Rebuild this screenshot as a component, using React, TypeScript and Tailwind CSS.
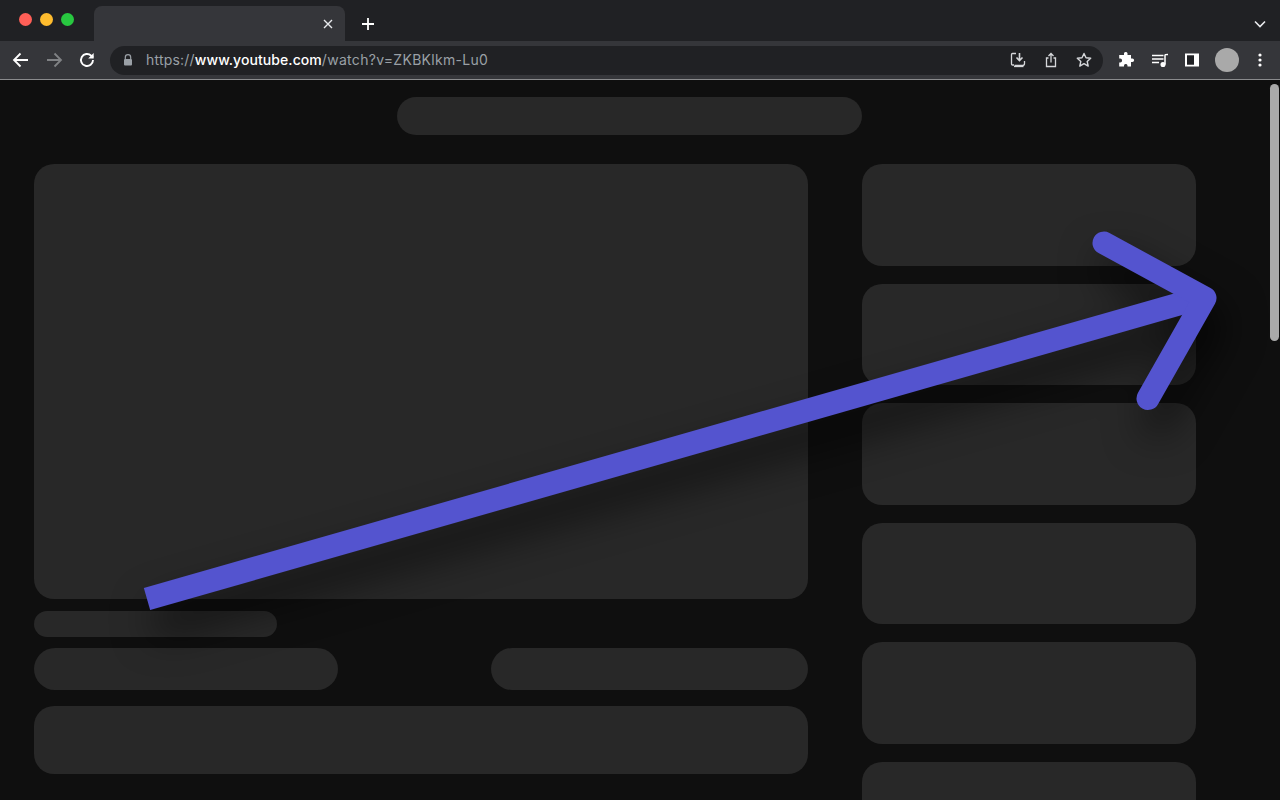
import React from "react";

const cards = ["h-[102px]", "h-[101px]", "h-[102px]", "h-[101px]", "h-[102px]", "h-[102px]"];

function Icon({ children, className = "" }: { children: React.ReactNode; className?: string }) {
  return (
    <svg viewBox="0 0 20 20" className={`w-5 h-5 shrink-0 ${className}`} fill="none" stroke="currentColor" strokeWidth="1.5">
      {children}
    </svg>
  );
}

export default function App() {
  return (
    <div className="relative w-[1280px] h-[800px] overflow-hidden flex flex-col bg-[#0f0f0f] font-['Inter','Liberation_Sans',sans-serif]">
      {/* Tab strip */}
      <div className="h-[41px] shrink-0 bg-[#202124] flex items-end pl-[19px]">
        <div className="flex items-center gap-[8px] h-[41px] pb-[3px]">
          <span className="w-[13px] h-[13px] rounded-full bg-[#ff5f57]" />
          <span className="w-[13px] h-[13px] rounded-full bg-[#febc2e]" />
          <span className="w-[13px] h-[13px] rounded-full bg-[#28c840]" />
        </div>
        <div className="ml-[20px] w-[251px] h-[35px] bg-[#35363a] rounded-t-[8px] flex items-center justify-end pr-[12px] text-[#e8eaed]">
          <svg viewBox="0 0 10 10" className="w-[10px] h-[10px]" stroke="currentColor" strokeWidth="1.4"><path d="M1 1l8 8M9 1l-8 8" /></svg>
        </div>
        <div className="ml-[16px] h-[35px] flex items-center text-white">
          <svg viewBox="0 0 14 14" className="w-[14px] h-[14px]" stroke="currentColor" strokeWidth="1.8"><path d="M7 1v12M1 7h12" /></svg>
        </div>
        <div className="ml-auto h-[35px] pr-[14px] flex items-center text-[#e8eaed]">
          <svg viewBox="0 0 12 8" className="w-[12px] h-[8px]" fill="none" stroke="currentColor" strokeWidth="1.6"><path d="M1 1.5l5 5 5-5" /></svg>
        </div>
      </div>

      {/* Toolbar */}
      <div className="h-[39px] shrink-0 bg-[#35363a] border-b border-[#8a8b8d] flex items-center pl-[10px]">
        <Icon className="text-white">
          <path d="M18 10H4.5M10.5 3.5L4 10l6.5 6.5" strokeWidth="1.8" />
        </Icon>
        <Icon className="ml-[14px] text-[#808285]">
          <path d="M3 10h13.5M10.5 3.5L17 10l-6.5 6.5" strokeWidth="1.8" />
        </Icon>
        <Icon className="ml-[13px] text-white">
          <path d="M16 10a6 6 0 1 1-1.8-4.3L16 7.5" strokeWidth="1.9" />
          <path d="M16.7 3v5.5h-5.5" fill="currentColor" stroke="none" />
        </Icon>
        <div className="ml-[13px] w-[993px] h-[29px] rounded-full bg-[#202124] flex items-center pl-[13px] pr-[9px]">
          <svg viewBox="0 0 10 12" className="w-[10px] h-[12px] text-[#9aa0a6]">
            <path d="M2.3 5V3.4a2.7 2.7 0 0 1 5.4 0V5" fill="none" stroke="currentColor" strokeWidth="1.2" />
            <rect x="1" y="5" width="8" height="6.5" rx="1" fill="currentColor" />
          </svg>
          <div className="ml-[13px] text-[14px] leading-[20px] tracking-[0.2px] text-[#9aa0a6] whitespace-nowrap">
            https://<span className="text-white font-medium tracking-[0.07px]">www.youtube.com</span><span className="tracking-[0.3px]">/watch?v=ZKBKlkm-Lu0</span>
          </div>
          <div className="ml-auto flex items-center gap-[13px] text-[#d5d7da]">
            <svg viewBox="0 0 20 20" className="w-5 h-5" fill="none" stroke="currentColor" strokeWidth="1.3">
              <path d="M8 3.5H4.5a1 1 0 0 0-1 1V14a1 1 0 0 0 1 1H6M16.5 11v2.5a2 2 0 0 1-2 2H6.5" />
              <path d="M6 16.5h9.5" />
              <path d="M11.5 3v7M8.5 7.5l3 3 3-3" strokeWidth="1.6" />
            </svg>
            <svg viewBox="0 0 20 20" className="w-5 h-5" fill="none" stroke="currentColor" strokeWidth="1.3">
              <path d="M7.5 8H5.5v8.5h9V8h-2" />
              <path d="M10 12.5V3.5M7.5 6L10 3.5 12.5 6" />
            </svg>
            <svg viewBox="0 0 20 20" className="w-5 h-5" fill="none" stroke="currentColor" strokeWidth="1.4" strokeLinejoin="round">
              <path d="M10 3.5l2 4.3 4.7.5-3.5 3.2 1 4.6-4.2-2.4-4.2 2.4 1-4.6-3.5-3.2 4.7-.5z" />
            </svg>
          </div>
        </div>
        <div className="ml-[13px] flex items-center text-white">
          <svg viewBox="0 0 20 20" className="w-5 h-5" fill="currentColor">
            <path d="M8 3.3a1.8 1.8 0 0 1 3.5 0V5H15v3.4h1.3a1.8 1.8 0 0 1 0 3.6H15v4.6h-3.5v-1.2a1.8 1.8 0 0 0-3.5 0v1.2H3.2v-4.2h1a1.9 1.9 0 0 0 0-3.8h-1V5H8z" />
          </svg>
          <svg viewBox="0 0 20 20" className="w-5 h-5 ml-[14px]" fill="none" stroke="currentColor" strokeWidth="1.5">
            <path d="M2 5.5h11.5M2 9h11.5M2 12.5h7" />
            <path d="M15 14.5V5.2c0-.6.7-.7 3-.7" />
            <circle cx="13" cy="14.5" r="1.8" fill="currentColor" />
          </svg>
          <svg viewBox="0 0 20 20" className="w-5 h-5 ml-[12px]">
            <path d="M3 3.5h14v13H3z M5 5.5v9h7v-9z" fill="currentColor" fillRule="evenodd" />
            <rect x="5" y="5.5" width="7" height="9" fill="#202124" />
          </svg>
          <div className="ml-[13px] w-6 h-6 rounded-full bg-[#a9a9a9]" />
          <svg viewBox="0 0 4 14" className="ml-[19px] w-[4px] h-[14px]" fill="currentColor">
            <circle cx="2" cy="2" r="1.6" /><circle cx="2" cy="7" r="1.6" /><circle cx="2" cy="12" r="1.6" />
          </svg>
        </div>
      </div>

      {/* Page */}
      <div className="relative flex-1 min-h-0 overflow-hidden">
        <div className="h-[38px] w-[465px] ml-[397px] mt-[17px] rounded-full bg-[#282828]" />
        <div className="flex items-start ml-[34px] mt-[29px] gap-[54px]">
          <div className="w-[774px] flex flex-col">
            <div className="h-[435px] rounded-[20px] bg-[#282828]" />
            <div className="mt-[12px] h-[26px] w-[243px] rounded-full bg-[#282828]" />
            <div className="mt-[11px] flex justify-between">
              <div className="h-[42px] w-[304px] rounded-full bg-[#282828]" />
              <div className="h-[42px] w-[317px] rounded-full bg-[#282828]" />
            </div>
            <div className="mt-[16px] h-[68px] rounded-[20px] bg-[#282828]" />
          </div>
          <div className="w-[334px] flex flex-col gap-[18px]">
            {cards.map((h, i) => (
              <div key={i} className={`${h} rounded-[20px] bg-[#282828]`} />
            ))}
          </div>
        </div>
        <div className="absolute right-[1px] top-[4px] w-[9px] h-[257px] rounded-full bg-[#a9a9a9]" />
      </div>

      {/* Annotation arrow */}
      <svg
        viewBox="0 0 1280 800"
        className="absolute inset-0 w-[1280px] h-[800px] pointer-events-none drop-shadow-[8px_24px_20px_rgba(0,0,0,0.7)]"
        fill="none"
        stroke="#5454cf"
        strokeWidth="23"
      >
        <path d="M147 599 L1200 298" />
        <path d="M1104 243 L1205 298 L1148 398.500" strokeLinecap="round" strokeLinejoin="round" />
      </svg>
    </div>
  );
}
